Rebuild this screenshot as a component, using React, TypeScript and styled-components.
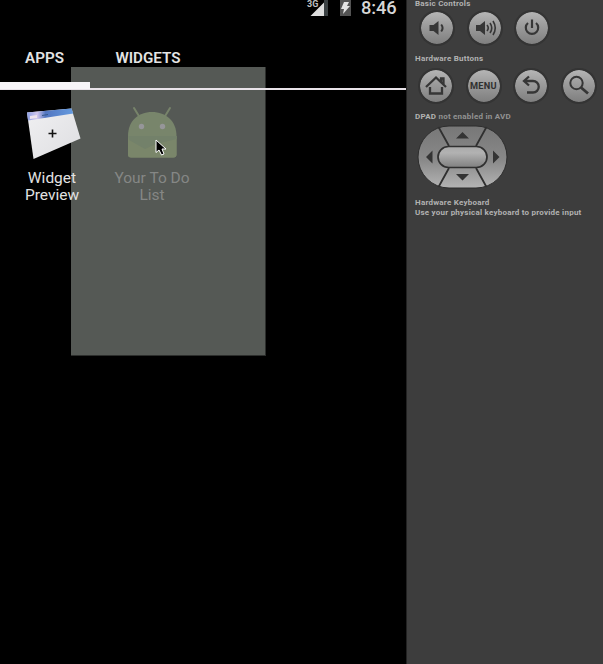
import React from 'react';
import styled, { createGlobalStyle } from 'styled-components';

const GlobalStyle = createGlobalStyle`
  * { box-sizing: border-box; }
  body { margin: 0; background: #000; overflow: hidden; }
`;

const Emulator = styled.main`
  display: grid;
  grid-template-columns: 406px 197px;
  width: 603px;
  height: 664px;
  font-family: Roboto, 'Liberation Sans', sans-serif;
`;

const Screen = styled.section`
  position: relative;
  isolation: isolate;
  background: #000;
  color: #e4e4e4;
`;

const DropPreview = styled.div`
  position: absolute;
  z-index: -1;
  left: 71px;
  top: 67px;
  width: 195px;
  height: 289px;
  background: #555955;
  border-right: 1px solid #2c2e2c;
  border-bottom: 1px solid #2c2e2c;
`;

const StatusBar = styled.header`
  display: flex;
  justify-content: flex-end;
  align-items: flex-start;
  height: 41px;
  padding-right: 8px;
`;

const StatusIcons = styled.svg`
  display: block;
  width: 52px;
  height: 18px;
`;

const Clock = styled.time`
  width: 37px;
  margin-left: 2px;
  font-size: 18.3px;
  font-weight: 500;
  line-height: 16px;
  color: #d6d6d6;
  letter-spacing: -0.1px;
`;

const Network = styled.span`
  width: 12px;
  margin-right: -12px;
  margin-top: -2px;
  font-size: 9px;
  font-weight: 700;
  line-height: 12px;
  z-index: 1;
  color: #c0c0c0;
`;

const TabBar = styled.nav`
  display: flex;
  height: 41px;
`;

const Tab = styled.div<{ $width: number }>`
  width: ${p => p.$width}px;
  padding-top: 7px;
  text-align: center;
  font-size: 15.2px;
  line-height: 20px;
  font-weight: 600;
`;

const Rule = styled.div`
  height: 8px;
  border-bottom: 2px solid #e9e3e9;
`;

const Indicator = styled.div`
  width: 90px;
  height: 7px;
  background: #f7f5f8;
`;

const WidgetGrid = styled.div`
  display: grid;
  grid-template-columns: 104px 96px;
  padding-top: 13px;
`;

const Item = styled.figure<{ $dim?: boolean }>`
  display: flex;
  flex-direction: column;
  align-items: center;
  margin: 0;
  color: ${p => (p.$dim ? '#858785' : '#e2e2e2')};
`;

const ItemIcon = styled.svg`
  display: block;
  width: 64px;
  height: 66px;
  flex: none;
`;

const ItemLabel = styled.figcaption`
  font-size: 15.5px;
  line-height: 17px;
  text-align: center;
  white-space: nowrap;
  margin-top: 1px;
`;

const Pointer = styled.svg`
  position: absolute;
  left: 155px;
  top: 139px;
  width: 13px;
  height: 18px;
`;

const Panel = styled.aside`
  background: #3d3d3d;
  border-left: 1px solid #222;
  padding-left: 8px;
`;

const Caption = styled.h2<{ $height: number; $line?: number }>`
  height: ${p => p.$height}px;
  margin: 0;
  font-size: 8px;
  font-weight: 700;
  line-height: ${p => p.$line ?? 10}px;
  color: #b2b2b2;
  letter-spacing: 0.23px;
  white-space: nowrap;
`;

const Muted = styled.span`
  color: #929292;
`;

const ButtonRow = styled.div<{ $height: number; $offset: number }>`
  display: flex;
  gap: 11.5px;
  height: ${p => p.$height}px;
  margin-left: ${p => p.$offset}px;
`;

const Key = styled.button`
  display: grid;
  place-items: center;
  flex: none;
  width: 36px;
  height: 36px;
  padding: 0;
  border: 2px solid #343434;
  border-radius: 50%;
  background: linear-gradient(#b5b5b5, #a0a0a0 35%, #7f7f7f) padding-box;
  color: #303030;
  font: 700 9.2px/10px Roboto, sans-serif;
  letter-spacing: 0.3px;
`;

const KeyIcon = styled.svg`
  display: block;
  width: 30px;
  height: 30px;
  fill: none;
  stroke: #363636;
  stroke-width: 2;
`;

const Dpad = styled.svg`
  display: block;
  width: 92px;
  height: 66px;
  margin-left: 1px;
`;

const PadHolder = styled.div`
  height: 73px;
`;

const SpeakerShape = () => <path d="M-1 -3H3L8-7V7L3 3H-1Z" fill="#363636" stroke="none" />;

export default function App() {
  return (
    <Emulator>
      <GlobalStyle />
      <Screen>
        <DropPreview />
        <StatusBar>
          <Network>3G</Network>
          <StatusIcons viewBox="0 0 52 18">
            <path d="M17 0H21V16H17Z" fill="#3b4143" />
            <path d="M3.5 16 17 2.5V16Z" fill="#dedede" />
            <path d="M33 0H44V16H33Z" fill="#535353" />
            <path d="M37 2H42L40 6H43L36 14 37 9H34Z" fill="#e4e4e4" />
          </StatusIcons>
          <Clock>8:46</Clock>
        </StatusBar>
        <TabBar>
          <Tab $width={89}>APPS</Tab>
          <Tab $width={118}>WIDGETS</Tab>
        </TabBar>
        <Rule><Indicator /></Rule>
        <WidgetGrid>
          <Item>
            <ItemIcon viewBox="0 0 64 66">
              <defs>
                <linearGradient id="titlebar">
                  <stop stopColor="#8b9ee2" /><stop offset=".22" stopColor="#d2c7ed" />
                  <stop offset=".4" stopColor="#5276c1" /><stop offset="1" stopColor="#659bdf" />
                </linearGradient>
                <linearGradient id="sheet" x2="1" y2="1">
                  <stop stopColor="#f0f0f2" /><stop offset="1" stopColor="#dedee1" />
                </linearGradient>
              </defs>
              <path d="M7 9.5 51.5 5.5 60.5 35.5 13.5 56Z" fill="url(#sheet)" />
              <path d="M7 9.5 51.5 5.5 53.3 10.5 8 17.5Z" fill="url(#titlebar)" />
              <path d="m10 13 7-1v3l-7 1Z" fill="#eee4ed" />
              <path d="m22 12.5 6-1" stroke="#35588b" />
              <path d="M28.5 30.5H36.5M32.5 26.5V34.5" stroke="#111" strokeWidth="1.6" />
            </ItemIcon>
            <ItemLabel>Widget<br />Preview</ItemLabel>
          </Item>
          <Item $dim>
            <ItemIcon viewBox="0 0 64 66">
              <path d="m14 5 5.5 9M50 5 44.5 14" stroke="#77836a" strokeWidth="2" strokeLinecap="round" />
              <path d="M8 33C8 18 18 9 32 9S56.5 18 56.5 33V51.5Q56.5 54.5 53.5 54.5H11Q8 54.5 8 51.5Z" fill="#78856b" />
              <path d="M8 33H56.5V51.5Q56.5 54.5 53.5 54.5H11Q8 54.5 8 51.5Z" fill="#7a866a" />
              <path d="M8 33H56.5V36L36 41 25 46 9 37Z" fill="#73816a" />
              <circle cx="21.5" cy="23.5" r="2.7" fill="#969699" />
              <circle cx="42.5" cy="23.5" r="2.7" fill="#969699" />
            </ItemIcon>
            <ItemLabel>Your To Do<br />List</ItemLabel>
          </Item>
        </WidgetGrid>
        <Pointer viewBox="0 0 13 18">
          <path d="M1 1V13.5L4 11 6.5 16 9 15 7 10H11Z" fill="#000" stroke="#fff" strokeWidth="1" />
        </Pointer>
      </Screen>
      <Panel>
        <Caption $height={10} $line={8}>Basic Controls</Caption>
        <ButtonRow $height={44} $offset={4}>
          <Key aria-label="Volume down"><KeyIcon viewBox="-8.5 -15 30 30"><SpeakerShape /><path d="M10.7-3.5Q13.5 0 10.7 3.5" /></KeyIcon></Key>
          <Key aria-label="Volume up"><KeyIcon viewBox="-7 -15 30 30"><SpeakerShape /><path d="M10-3Q12.5 0 10 3M13-5Q16.5 0 13 5M16-7Q20.5 0 16 7" strokeWidth="1.6" /></KeyIcon></Key>
          <Key aria-label="Power"><KeyIcon viewBox="0 0 30 30"><path d="M11 10A6.2 6.2 0 1 0 19 10M15 6.5V15" strokeWidth="2.2" /></KeyIcon></Key>
        </ButtonRow>
        <Caption $height={14}>Hardware Buttons</Caption>
        <ButtonRow $height={44} $offset={3}>
          <Key aria-label="Home"><KeyIcon viewBox="0 0 30 30"><path d="M5 16 15 6.5 25 16M20 11V7.5H22.5V13M9 16V22.5H21V16" strokeWidth="2.3" /></KeyIcon></Key>
          <Key>MENU</Key>
          <Key aria-label="Back"><KeyIcon viewBox="0 0 30 30"><path d="M13 5.5 8 10 13 14.5M8 10H17A5.7 5.7 0 0 1 17 21.5H11" strokeWidth="2.3" /></KeyIcon></Key>
          <Key aria-label="Search"><KeyIcon viewBox="0 0 30 30"><circle cx="12.5" cy="12" r="6.2" /><path d="m17 16.5 7 6" strokeWidth="2.8" /></KeyIcon></Key>
        </ButtonRow>
        <Caption $height={13}>DPAD <Muted>not enabled in AVD</Muted></Caption>
        <PadHolder>
          <Dpad viewBox="0 0 92 66">
            <defs>
              <linearGradient id="pad" x2="0" y2="1"><stop stopColor="#777" /><stop offset=".55" stopColor="#898989" /><stop offset="1" stopColor="#b4b4b4" /></linearGradient>
              <linearGradient id="select" x2="0" y2="1"><stop stopColor="#aaa" /><stop offset=".3" stopColor="#b2b2b2" /><stop offset="1" stopColor="#808080" /></linearGradient>
            </defs>
            <rect x="2" y="1" width="89" height="62" rx="31" fill="url(#pad)" stroke="#2d2d2d" />
            <path d="M22.5 2 33 21M70.5 2 60 21M22.5 62 33 43M70.5 62 60 43" stroke="#303030" strokeWidth="1.8" />
            <rect x="22" y="21.5" width="49" height="21" rx="10.5" fill="url(#select)" stroke="#303030" strokeWidth="1.7" />
            <path d="m40 13.5 6.5-6.5 6.5 6.5ZM40 49h13l-6.5 6.5ZM16.5 25.5v13l-6.5-6.5ZM77 25.5v13l6.5-6.5Z" fill="#343434" />
          </Dpad>
        </PadHolder>
        <Caption $height={9.5}>Hardware Keyboard</Caption>
        <Caption $height={10}>Use your physical keyboard to provide input</Caption>
      </Panel>
    </Emulator>
  );
}
